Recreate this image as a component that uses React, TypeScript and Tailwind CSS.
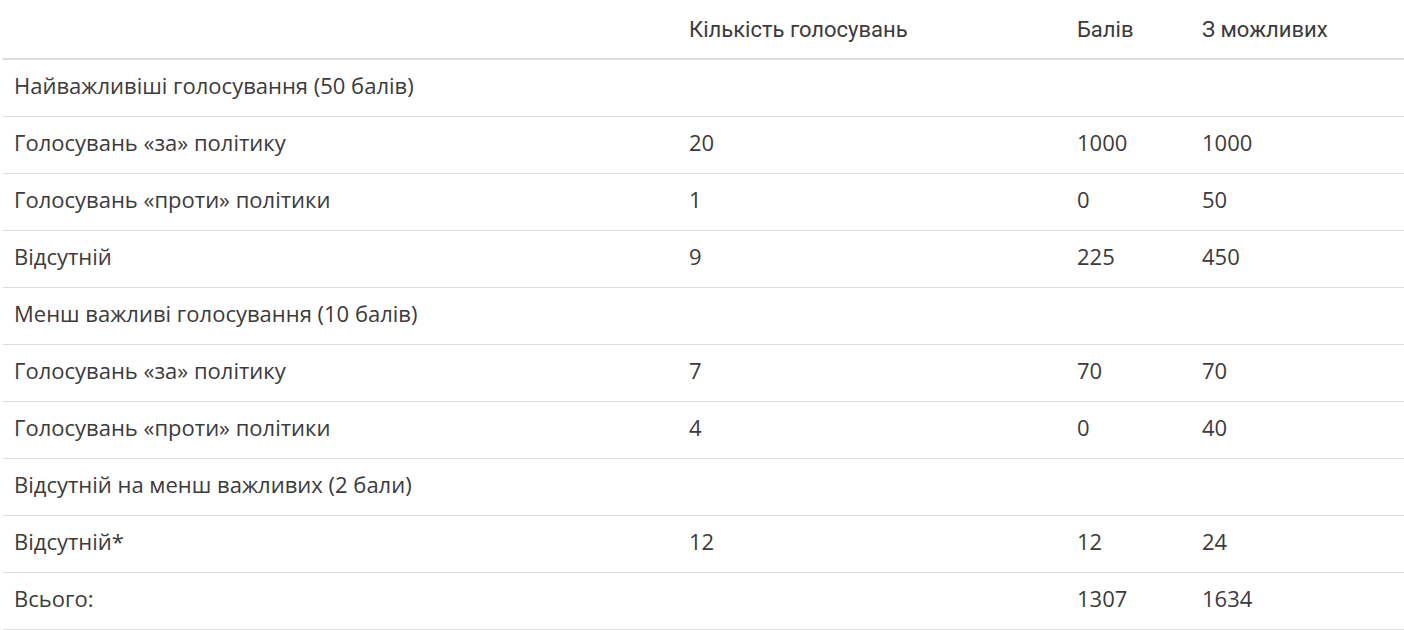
import React from "react";

const rows: { cells: string[]; section?: boolean }[] = [
  { cells: ["Найважливіші голосування (50 балів)", "", "", ""], section: true },
  { cells: ["Голосувань «за» політику", "20", "1000", "1000"] },
  { cells: ["Голосувань «проти» політики", "1", "0", "50"] },
  { cells: ["Відсутній", "9", "225", "450"] },
  { cells: ["Менш важливі голосування (10 балів)", "", "", ""], section: true },
  { cells: ["Голосувань «за» політику", "7", "70", "70"] },
  { cells: ["Голосувань «проти» політики", "4", "0", "40"] },
  { cells: ["Відсутній на менш важливих (2 бали)", "", "", ""], section: true },
  { cells: ["Відсутній*", "12", "12", "24"] },
  { cells: ["Всього:", "", "1307", "1634"] },
];

const cols = "grid grid-cols-[675px_388px_125px_213px]";

export default function App() {
  return (
    <div className="w-[1404px] h-[630px] bg-white overflow-hidden">
      <div className="ml-[3px] w-[1401px] text-[#3d3a3c]">
        <div
          className={`${cols} h-[60px] border-b-2 border-[#dddddd] items-center text-[22px]`}
          style={{ fontFamily: '"Roboto", "Liberation Sans", sans-serif' }}
        >
          <div className="pl-[11px]"></div>
          <div className="pl-[11px]">Кількість голосувань</div>
          <div className="pl-[11px]">Балів</div>
          <div className="pl-[11px]">З можливих</div>
        </div>
        {rows.map((r, i) => (
          <div
            key={i}
            className={`${cols} h-[57px] border-b border-[#dddddd] items-center text-[22px]`}
            style={{ fontFamily: '"Open Sans", "Noto Sans", sans-serif' }}
          >
            {r.cells.map((c, j) => (
              <div key={j} className="pl-[11px] pb-[5px] whitespace-nowrap">
                {c}
              </div>
            ))}
          </div>
        ))}
      </div>
    </div>
  );
}
